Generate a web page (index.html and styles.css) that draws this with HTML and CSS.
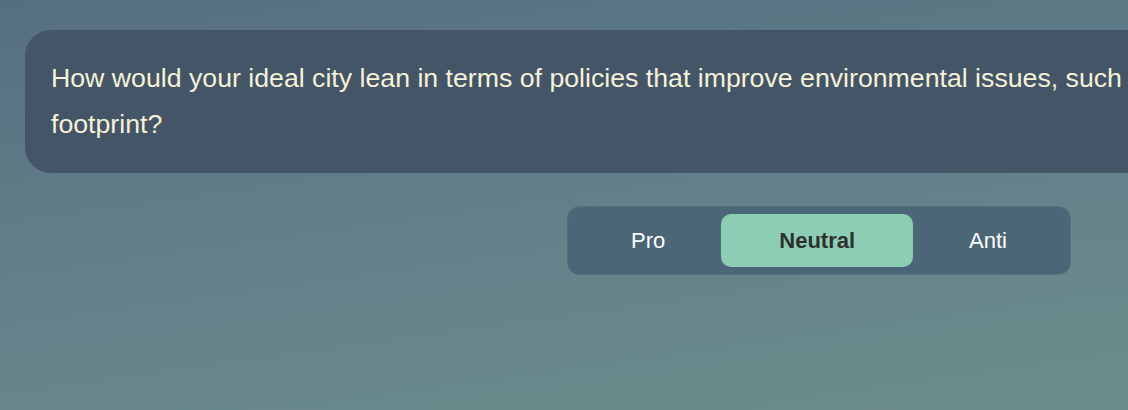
FILE: index.html
```html
<!DOCTYPE html>
<html lang="en">
<head>
<meta charset="utf-8">
<title>Question</title>
<link rel="stylesheet" href="styles.css">
</head>
<body>
<main class="page">
  <section class="question-card">
    <p class="question-text">How would your ideal city lean in terms of policies that improve environmental issues, such as carbon footprint?</p>
  </section>
  <div class="answer-row">
    <div class="toggle">
      <button class="toggle-btn">Pro</button>
      <button class="toggle-btn is-active">Neutral</button>
      <button class="toggle-btn">Anti</button>
    </div>
  </div>
</main>
</body>
</html>
```
FILE: styles.css
```css
html, body {
  margin: 0;
  padding: 0;
  height: 100%;
  overflow: hidden;
}
body {
  background: linear-gradient(172deg, #566f7f 0%, #62808a 50%, #6c8e8b 100%);
  font-family: "Liberation Sans", Arial, sans-serif;
}
.page {
  padding-top: 30px;
}
.question-card {
  margin-left: 25px;
  width: 1300px;
  box-sizing: border-box;
  background: #435566;
  border-radius: 26px;
  padding: 25px 26px 26px 26px;
}
.question-text {
  margin: 0;
  color: #f6f1d9;
  font-size: 26.7px;
  line-height: 46px;
}
.answer-row {
  display: flex;
  justify-content: flex-end;
  padding-right: 58px;
  margin-top: 34px;
}
.toggle {
  display: flex;
  background: #4b6677;
  border-radius: 12px;
  padding: 7px;
  box-shadow: 0 0 0 1px rgba(70, 95, 110, 0.5);
}
.toggle-btn {
  border: none;
  background: transparent;
  color: #ffffff;
  font-family: "Liberation Sans", Arial, sans-serif;
  font-size: 22px;
  height: 53px;
  padding: 0 56px;
  border-radius: 10px;
  cursor: pointer;
}
.toggle-btn.is-active {
  background: #8dcdb4;
  color: #2e302f;
  font-weight: bold;
  padding: 0 58px;
}
```
